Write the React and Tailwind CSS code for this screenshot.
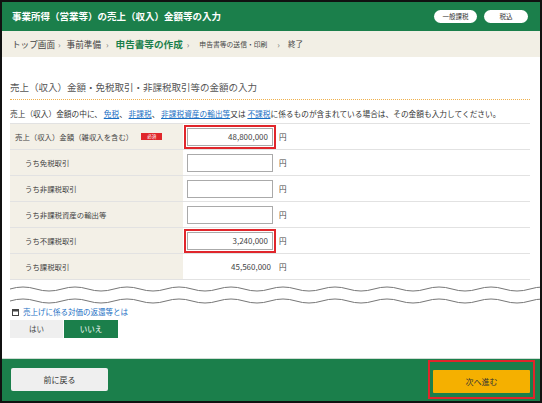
import React from 'react';

const GREEN = 'bg-[#1b7f4b]';

const rows = [
  { label: '売上（収入）金額（雑収入を含む）', value: '48,800,000', required: true, marked: true, main: true },
  { label: 'うち免税取引', value: '' },
  { label: 'うち非課税取引', value: '' },
  { label: 'うち非課税資産の輸出等', value: '' },
  { label: 'うち不課税取引', value: '3,240,000', marked: true },
  { label: 'うち課税取引', value: '45,560,000', readOnly: true },
];

function Wave({ y }) {
  // sine-ish wave, period 52px
  let d = `M0 ${y}`;
  for (let x = 0; x < 540; x += 26) {
    const up = (x / 26) % 2 === 0;
    d += ` Q${x + 13} ${up ? y - 4 : y + 4} ${x + 26} ${y}`;
  }
  return <path d={d} fill="none" stroke="#777" strokeWidth="1" />;
}

export default function App() {
  return (
    <div
      className="w-[542px] h-[403px] border-2 border-[#111] bg-white flex flex-col overflow-hidden text-[#333]"
      style={{ fontFamily: '"Noto Sans CJK JP", "Noto Sans", sans-serif' }}
    >
      {/* header */}
      <div className={`h-[29px] shrink-0 ${GREEN} flex items-center justify-between pl-[10px] pr-[12px]`}>
        <h1 className="text-white font-bold text-[9.5px] leading-none">事業所得（営業等）の売上（収入）金額等の入力</h1>
        <div className="flex gap-[7px]">
          <span className="w-[43px] h-[13px] rounded-full bg-white text-[6.5px] text-[#333] flex items-center justify-center">一般課税</span>
          <span className="w-[44px] h-[13px] rounded-full bg-white text-[6.5px] text-[#333] flex items-center justify-center">税込</span>
        </div>
      </div>

      {/* breadcrumb */}
      <div className="h-[26px] shrink-0 bg-[#f2efe5] flex items-center pl-[10px] text-[8.6px] text-[#444]">
        <span>トップ画面</span>
        <span className="ml-[3px] mr-[6px] text-[#777]">›</span>
        <span>事前準備</span>
        <span className="ml-[5px] mr-[7px] text-[#777]">›</span>
        <span className="text-[9.6px] font-bold text-[#1b7f4b]">申告書等の作成</span>
        <span className="ml-[4px] mr-[10px] text-[#777]">›</span>
        <span className="text-[6.8px]">申告書等の送信・印刷</span>
        <span className="ml-[10px] mr-[8px] text-[#777]">›</span>
        <span className="text-[7.5px]">終了</span>
      </div>

      {/* main */}
      <div className="flex-1 pl-[8px] pr-[10px] pt-[23px]">
        <div className="text-[9.5px] leading-[14px] text-[#555] pb-[5px] border-b border-dotted border-[#f0b04a]">
          売上（収入）金額・免税取引・非課税取引等の金額の入力
        </div>
        <p className="mt-[8px] text-[7.7px] leading-[11px] text-[#333] whitespace-nowrap">
          売上（収入）金額の中に、 <a className="text-[#1a6fc4] underline">免税</a>、 <a className="text-[#1a6fc4] underline">非課税</a>、 <a className="text-[#1a6fc4] underline">非課税資産の輸出等</a>又は <a className="text-[#1a6fc4] underline">不課税</a>に係るものが含まれている場合は、その金額も入力してください。
        </p>

        <div className="mt-[4px] border-t border-[#e2e2e2]">
          {rows.map((r) => (
            <div key={r.label} className="h-[25px] flex border-b border-[#e2e2e2] box-content">
              <div className={`w-[173px] bg-[#f3f0e7] flex items-center text-[7.4px] text-[#444] ${r.main ? 'pl-[5px]' : 'pl-[15px]'}`}>
                <span>{r.label}</span>
                {r.required && (
                  <span className="ml-[8px] w-[21px] h-[7px] bg-[#e0262b] text-white text-[4.5px] leading-none flex items-center justify-center">必須</span>
                )}
              </div>
              <div className="flex-1 flex items-center pl-[1px]">
                {r.readOnly ? (
                  <div className="w-[92px] pr-[5px] text-right text-[8px] text-[#444]">{r.value}</div>
                ) : (
                  <div className={`p-[1px] border-2 ${r.marked ? 'border-[#e0262b]' : 'border-transparent'}`}>
                    <div className="w-[86px] h-[18px] border border-[#aaa] bg-white flex items-center justify-end pr-[4px] text-[8px] text-[#444]">
                      {r.value}
                    </div>
                  </div>
                )}
                <span className="ml-[3px] text-[7.5px] text-[#444]">円</span>
              </div>
            </div>
          ))}
        </div>

        <svg width="530" height="22" className="mt-[4px] block overflow-visible">
          <Wave y={5} />
          <Wave y={17} />
        </svg>

        <div className="mt-[1px] h-[10px] flex items-center gap-[4px]">
          <svg width="7" height="7" viewBox="0 0 7 7" className="shrink-0 ml-[2px]">
            <rect x="0.5" y="0.5" width="6" height="6" fill="#fff" stroke="#444" />
            <rect x="0.5" y="0.5" width="6" height="2" fill="#444" />
          </svg>
          <a className="text-[7.5px] text-[#1a6fc4] leading-none">売上げに係る対価の返還等とは</a>
        </div>

        <div className="mt-[3px] flex gap-[1px]">
          <button className="w-[53px] h-[18px] bg-[#efefef] text-[7.5px] text-[#444]">はい</button>
          <button className="w-[54px] h-[18px] bg-[#1b7f4b] text-[7.5px] text-white">いいえ</button>
        </div>
      </div>

      {/* footer */}
      <div className={`h-[43px] shrink-0 ${GREEN} border-t border-[#cfdcd4] flex items-center justify-between pl-[9px] pr-[5px] pb-[1px]`}>
        <button className="w-[97px] h-[23px] bg-[#efefef] rounded-[2px] text-[8px] text-[#333]">前に戻る</button>
        <div className="border-2 border-[#e0262b] px-[3px] py-[4px]">
          <button className="w-[97px] h-[23px] bg-[#f5b000] rounded-[1px] text-[8px] text-[#333]">次へ進む</button>
        </div>
      </div>
    </div>
  );
}
